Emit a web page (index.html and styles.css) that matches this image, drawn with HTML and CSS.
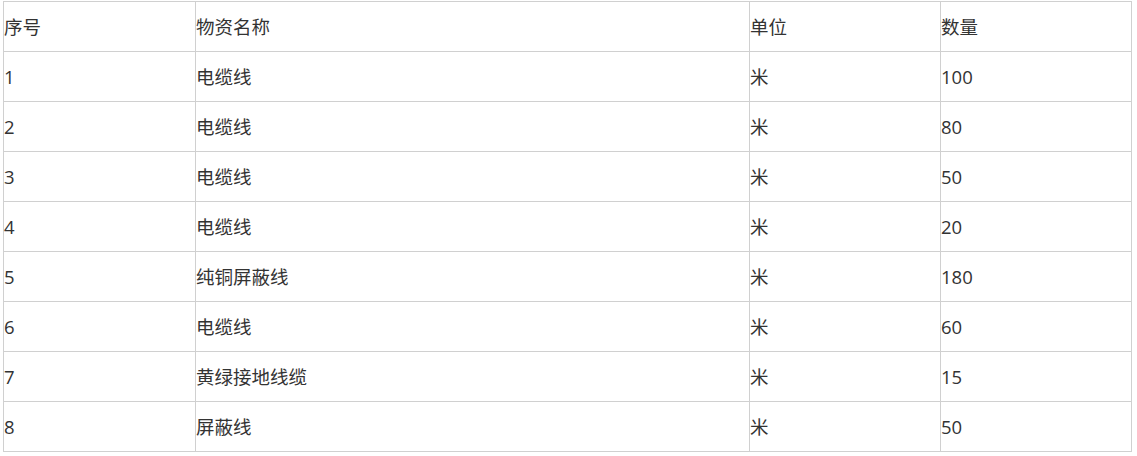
FILE: index.html
```html
<!DOCTYPE html>
<html lang="zh">
<head>
<meta charset="utf-8">
<link rel="stylesheet" href="styles.css">
</head>
<body>
<table class="grid">
  <colgroup>
    <col class="c1"><col class="c2"><col class="c3"><col class="c4">
  </colgroup>
  <tr><td>序号</td><td>物资名称</td><td>单位</td><td>数量</td></tr>
  <tr><td>1</td><td>电缆线</td><td>米</td><td>100</td></tr>
  <tr><td>2</td><td>电缆线</td><td>米</td><td>80</td></tr>
  <tr><td>3</td><td>电缆线</td><td>米</td><td>50</td></tr>
  <tr><td>4</td><td>电缆线</td><td>米</td><td>20</td></tr>
  <tr><td>5</td><td>纯铜屏蔽线</td><td>米</td><td>180</td></tr>
  <tr><td>6</td><td>电缆线</td><td>米</td><td>60</td></tr>
  <tr><td>7</td><td>黄绿接地线缆</td><td>米</td><td>15</td></tr>
  <tr><td>8</td><td>屏蔽线</td><td>米</td><td>50</td></tr>
</table>
</body>
</html>
```

FILE: styles.css
```css
html, body {
  margin: 0;
  padding: 0;
  background: #fff;
}
body {
  padding: 1px 0 0 3px;
  font-family: "Open Sans", "Noto Sans CJK SC", sans-serif;
  font-size: 18.5px;
  color: #333;
}
.grid {
  border-collapse: collapse;
  table-layout: fixed;
  width: 1128px;
}
.c1 { width: 192px; }
.c2 { width: 554px; }
.c3 { width: 191px; }
.c4 { width: 191px; }
.grid tr {
  height: 50px;
}
.grid td {
  border: 1px solid #d0d0d0;
  padding: 1px 0 0 0;
  vertical-align: middle;
  line-height: 24px;
}
```
